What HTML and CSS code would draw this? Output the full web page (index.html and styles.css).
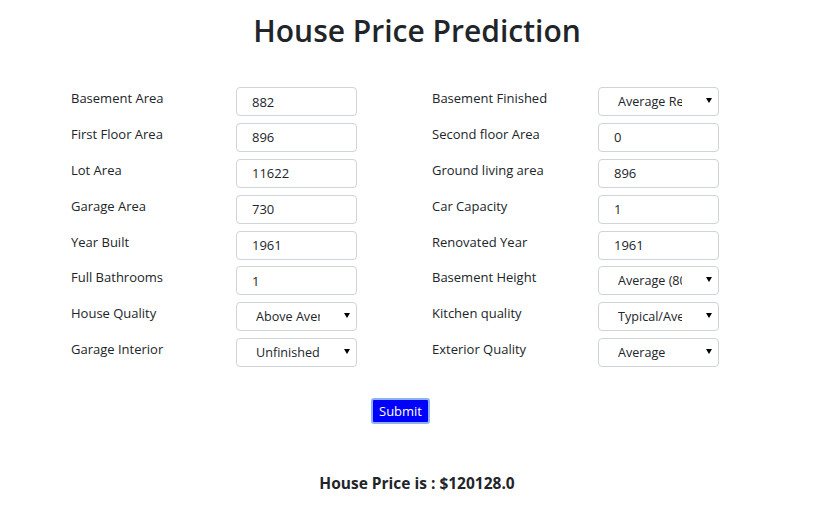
FILE: index.html
```html
<!DOCTYPE html>
<html>
<head>
<meta charset="utf-8">
<link rel="stylesheet" href="styles.css">
</head>
<body>
<h1 class="title">House Price Prediction</h1>
<form class="form">
  <div class="grid">
    <div class="row"><label class="lbl">Basement Area</label><input class="field" value="882"></div>
    <div class="row"><label class="lbl">Basement Finished</label><div class="sel"><select class="field select"><option>Average Rec Room</option></select></div></div>
    <div class="row"><label class="lbl">First Floor Area</label><input class="field" value="896"></div>
    <div class="row"><label class="lbl">Second floor Area</label><input class="field" value="0"></div>
    <div class="row"><label class="lbl">Lot Area</label><input class="field" value="11622"></div>
    <div class="row"><label class="lbl">Ground living area</label><input class="field" value="896"></div>
    <div class="row"><label class="lbl">Garage Area</label><input class="field" value="730"></div>
    <div class="row"><label class="lbl">Car Capacity</label><input class="field" value="1"></div>
    <div class="row"><label class="lbl">Year Built</label><input class="field" value="1961"></div>
    <div class="row"><label class="lbl">Renovated Year</label><input class="field" value="1961"></div>
    <div class="row"><label class="lbl">Full Bathrooms</label><input class="field" value="1"></div>
    <div class="row"><label class="lbl">Basement Height</label><div class="sel"><select class="field select"><option>Average (80-89 inches)</option></select></div></div>
    <div class="row"><label class="lbl">House Quality</label><div class="sel"><select class="field select"><option>Above Average</option></select></div></div>
    <div class="row"><label class="lbl">Kitchen quality</label><div class="sel"><select class="field select"><option>Typical/Average</option></select></div></div>
    <div class="row"><label class="lbl">Garage Interior</label><div class="sel"><select class="field select"><option>Unfinished</option></select></div></div>
    <div class="row"><label class="lbl">Exterior Quality</label><div class="sel"><select class="field select"><option>Average</option></select></div></div>
  </div>
  <div class="actions"><button type="button" class="submit">Submit</button></div>
</form>
<p class="result">House Price is : $120128.0</p>
</body>
</html>
```
FILE: styles.css
```css
html, body {
  margin: 0;
  padding: 0;
  background: #fff;
}
body {
  font-family: "Open Sans", "Noto Sans", sans-serif;
  color: #212529;
  width: 814px;
}
.title {
  margin: 0;
  padding-top: 8px;
  padding-left: 20px;
  text-align: center;
  font-size: 30px;
  font-weight: 600;
  line-height: 46px;
  color: #212529;
}
.form {
  margin-top: 33px;
  padding-left: 71px;
}
.grid {
  display: grid;
  grid-template-columns: 361px 300px;
  row-gap: 6.9px;
}
.row {
  display: flex;
  align-items: flex-start;
}
.lbl {
  width: 165px;
  font-size: 13px;
  line-height: 20px;
  padding-top: 1px;
  color: #212529;
}
.row:nth-child(even) .lbl {
  width: 166px;
}
.field {
  box-sizing: border-box;
  width: 121px;
  height: 29px;
  border: 1px solid #ced4da;
  border-radius: 4px;
  padding: 0 0 0 15px;
  font-family: "Open Sans", "Noto Sans", sans-serif;
  font-size: 13px;
  color: #212529;
  background: #fff;
  margin: 0;
  outline: none;
}
.sel {
  position: relative;
  width: 121px;
}
.select {
  -webkit-appearance: none;
  appearance: none;
  font-size: 12.6px;
  padding-left: 19px;
  padding-right: 36px;
}
.sel::after {
  content: "";
  position: absolute;
  right: 7px;
  top: 11px;
  border-left: 3px solid transparent;
  border-right: 3px solid transparent;
  border-top: 5px solid #000;
  pointer-events: none;
}
.actions {
  padding-left: 300px;
  margin-top: 31px;
}
.submit {
  font-family: "Open Sans", "Noto Sans", sans-serif;
  font-size: 13px;
  color: #fff;
  background: #0000ff;
  border: 2px solid #8db2f8;
  border-radius: 3px;
  height: 26px;
  padding: 0 6px;
  line-height: 20px;
}
.result {
  margin: 48px 0 0 0;
  padding-left: 20px;
  text-align: center;
  font-weight: 700;
  font-size: 15.5px;
  line-height: 22px;
}
```
